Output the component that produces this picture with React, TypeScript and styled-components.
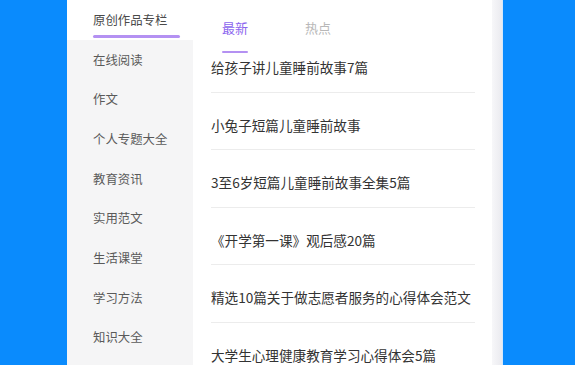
import React, { ReactElement, useState } from 'react';
import styled, { createGlobalStyle, css } from 'styled-components';

const categories: string[] = [
  '原创作品专栏',
  '在线阅读',
  '作文',
  '个人专题大全',
  '教育资讯',
  '实用范文',
  '生活课堂',
  '学习方法',
  '知识大全',
];

const tabs: string[] = ['最新', '热点'];

const articles: string[] = [
  '给孩子讲儿童睡前故事7篇',
  '小兔子短篇儿童睡前故事',
  '3至6岁短篇儿童睡前故事全集5篇',
  '《开学第一课》观后感20篇',
  '精选10篇关于做志愿者服务的心得体会范文',
  '大学生心理健康教育学习心得体会5篇',
];

function App(): ReactElement {
  const [category, setCategory] = useState(0);
  const [tab, setTab] = useState(0);

  return (
    <>
      <GlobalStyle />
      <Page>
        <Panel>
          <Sidebar>
            {categories.map((name, i) => (
              <CategoryItem
                key={name}
                active={i === category}
                onClick={() => setCategory(i)}
              >
                {name}
              </CategoryItem>
            ))}
          </Sidebar>

          <Content>
            <TabBar>
              {tabs.map((name, i) => (
                <Tab key={name} active={i === tab} onClick={() => setTab(i)}>
                  {name}
                </Tab>
              ))}
            </TabBar>

            <ArticleList>
              {articles.map((title, i) => (
                <Article key={title} first={i === 0}>
                  {title}
                </Article>
              ))}
            </ArticleList>
          </Content>

          <ScrollEdge />
        </Panel>
      </Page>
    </>
  );
}

const purple = '#8b66ee';
const underline = '#b491f2';

const GlobalStyle = createGlobalStyle`
  html, body {
    margin: 0;
    padding: 0;
    height: 100%;
    overflow: hidden;
  }

  body {
    background: #0a8bfd;
    font-family: "Noto Sans CJK SC", "Noto Sans", sans-serif;
  }
`;

const Page = styled.div`
  display: flex;
  height: 365px;
  padding-left: 67px;
  background: #0a8bfd;
`;

const Panel = styled.div`
  display: flex;
  width: 436px;
  height: 100%;
  background: #ffffff;
  box-shadow: inset 1px 0 0 #dcecfb;
  overflow: hidden;
`;

const Sidebar = styled.ul`
  margin: 0;
  padding: 0;
  list-style: none;
  width: 126px;
  flex-shrink: 0;
  background: #f5f5f6;
`;

type CategoryItemProps = {
  active: boolean;
};
const CategoryItem = styled.li<CategoryItemProps>`
  position: relative;
  height: 39.7px;
  padding-left: 26px;
  display: flex;
  align-items: center;
  font-size: 12.4px;
  color: #5a5a5a;
  cursor: pointer;

  ${(p) =>
    p.active &&
    css`
      background: #ffffff;
      color: #4a4a4a;

      &::after {
        content: '';
        position: absolute;
        left: 26px;
        width: 87px;
        bottom: 2px;
        height: 2.5px;
        border-radius: 2px;
        background: ${underline};
      }
    `}
`;

const Content = styled.div`
  flex: 1;
  display: flex;
  flex-direction: column;
  padding: 0 17px 0 18px;
`;

const TabBar = styled.div`
  display: flex;
  flex-shrink: 0;
  gap: 57px;
  padding-left: 11px;
  height: 54px;
`;

type TabProps = {
  active: boolean;
};
const Tab = styled.div<TabProps>`
  position: relative;
  padding-top: 18px;
  font-size: 13px;
  color: ${(p) => (p.active ? purple : '#b8b8b8')};
  cursor: pointer;

  ${(p) =>
    p.active &&
    css`
      &::after {
        content: '';
        position: absolute;
        left: 0;
        right: 0;
        bottom: 1px;
        height: 2.5px;
        border-radius: 2px;
        background: ${underline};
      }
    `}
`;

const ArticleList = styled.ul`
  margin: 0;
  padding: 0;
  list-style: none;
`;

type ArticleProps = {
  first: boolean;
};
const Article = styled.li<ArticleProps>`
  padding: ${(p) => (p.first ? '5px' : '24px')} 0 16px;
  border-bottom: 1px solid #ececec;
  font-size: 13.6px;
  line-height: 16.5px;
  color: #333333;
  white-space: nowrap;
`;

const ScrollEdge = styled.div`
  width: 11px;
  flex-shrink: 0;
  background: linear-gradient(to right, #f7f7f9, #e9e9ee);
  box-shadow: inset -1px 0 0 #d6e8fb;
`;

export default App;
